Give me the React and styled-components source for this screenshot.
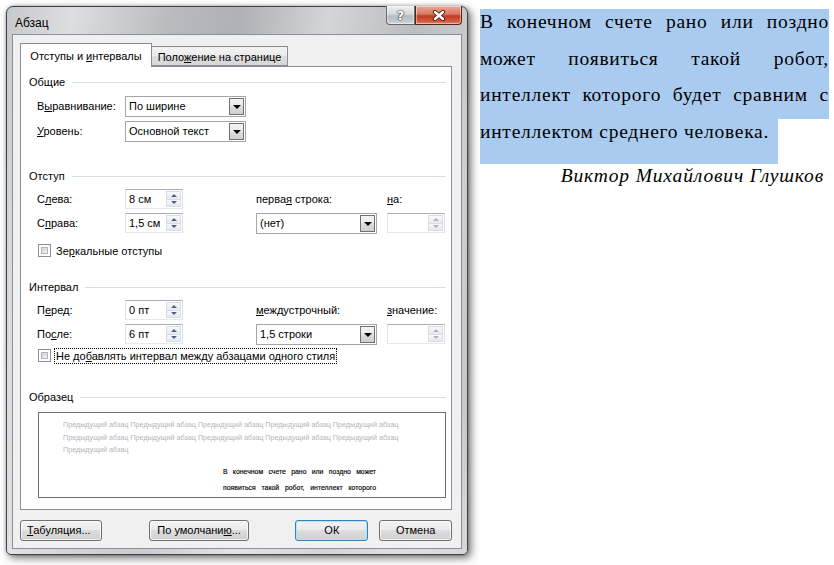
import React from 'react';
import styled, { createGlobalStyle } from 'styled-components';

const GlobalStyle = createGlobalStyle`
  html, body {
    margin: 0;
    background: #fff;
  }
  body {
    font-family: "Liberation Sans", Arial, sans-serif;
  }
`;

const uiFont = `"Liberation Sans", Arial, sans-serif`;

const Page = styled.div`
  display: flex;
  align-items: flex-start;
  padding: 6px 0 0 6px;
  width: 834px;
  height: 565px;
  box-sizing: border-box;
  overflow: hidden;
`;

// ---------- window frame ----------

const Window = styled.div`
  width: 462px;
  height: 549px;
  box-sizing: border-box;
  border: 1px solid #3f4246;
  border-radius: 7px 7px 5px 5px;
  padding: 0 5px 5px 5px;
  display: flex;
  flex-direction: column;
  background:
    linear-gradient(180deg, rgba(255, 255, 255, 0) 0%, rgba(255, 255, 255, 0) 70%, rgba(255, 255, 255, 0.35) 100%),
    linear-gradient(100deg, #c6c9cc 0%, #dcdedf 12%, #b8bbbe 30%, #aeb1b5 42%, #d3d5d7 58%, #bbbec1 74%, #cdcfd1 88%, #c0c3c6 100%);
  box-shadow: 3px 3px 9px rgba(0, 0, 0, 0.55), 0 0 3px rgba(0, 0, 0, 0.3);
  font-family: ${uiFont};
  font-size: 11px;
  color: #000;
`;

const TitleBar = styled.div`
  height: 27px;
  display: flex;
  align-items: flex-start;
`;

const Title = styled.div`
  flex: 1;
  padding: 9px 0 0 3px;
  font-size: 12px;
  line-height: 15px;
  color: #000;
`;

const CaptionButton = styled.div`
  height: 19px;
  width: ${(p) => p.$w}px;
  margin-top: -1px;
  box-sizing: border-box;
  display: flex;
  align-items: center;
  justify-content: center;
  border: 1px solid ${(p) => (p.$close ? '#5a2219' : '#62676d')};
  border-top: none;
  border-radius: ${(p) => (p.$close ? '0 0 4px 0' : '0 0 0 4px')};
  background: ${(p) =>
    p.$close
      ? 'linear-gradient(180deg, #e8aa96 0%, #d97b63 45%, #c23a22 55%, #cf5b40 85%, #e0866c 100%)'
      : 'linear-gradient(180deg, #eef0f2 0%, #d4d8dc 45%, #b6bcc3 55%, #c3c8ce 85%, #d8dce0 100%)'};
  box-shadow: inset 0 0 0 1px rgba(255, 255, 255, 0.45);
`;

const HelpGlyph = styled.span`
  font-family: "DejaVu Sans", sans-serif;
  font-weight: bold;
  font-size: 13px;
  color: #fff;
  text-shadow: 0 0 1px #3c4046, 0 0 1px #3c4046, 0 0 2px #3c4046;
`;

// ---------- client area ----------

const Client = styled.div`
  flex: 1;
  border: 1px solid #8b9096;
  background: #f0f0f0;
  padding: 8px 9px 7px 7px;
  display: flex;
  flex-direction: column;
`;

const TabStrip = styled.div`
  display: flex;
  align-items: flex-end;
  height: 23px;
  position: relative;
  z-index: 1;
`;

const Tab = styled.div`
  box-sizing: border-box;
  width: ${(p) => (p.$active ? 132 : 136)}px;
  height: ${(p) => (p.$active ? 24 : 20)}px;
  margin-bottom: ${(p) => (p.$active ? -1 : 0)}px;
  padding: ${(p) => (p.$active ? '5px 0 0 0' : '3px 0 0 0')};
  text-align: center;
  border: 1px solid #898c95;
  border-bottom: ${(p) => (p.$active ? 'none' : '1px solid #898c95')};
  border-left: ${(p) => (p.$active ? '1px solid #898c95' : 'none')};
  background: ${(p) =>
    p.$active ? '#fff' : 'linear-gradient(180deg, #f3f3f3 0%, #ebebeb 50%, #dedede 50%, #d6d6d6 100%)'};
  white-space: nowrap;
  line-height: 14px;
`;

const Panel = styled.div`
  width: 432px;
  height: 444px;
  box-sizing: border-box;
  border: 1px solid #898c95;
  background: #fff;
  padding: 8px 5px 0 8px;
`;

const SectionHead = styled.div`
  display: flex;
  align-items: center;
  height: 15px;
  margin-top: ${(p) => p.$top}px;
  line-height: 15px;

  &::after {
    content: '';
    flex: 1;
    height: 1px;
    margin-left: 7px;
    background: #d5dfe5;
  }
`;

const ControlGrid = styled.div`
  display: grid;
  grid-template-columns: 88px 131px 131px 59px;
  grid-auto-rows: ${(p) => p.$row}px;
  row-gap: 4px;
  margin: ${(p) => p.$top}px 0 0 8px;
  align-items: center;
`;

const Label = styled.div`
  line-height: 15px;
  white-space: nowrap;
  grid-column: ${(p) => p.$col || 'auto'};
`;

// ---------- inputs ----------

const SpinBox = styled.div`
  width: 58px;
  height: 20px;
  box-sizing: border-box;
  border: 1px solid;
  border-color: #abadb3 #dbdfe6 #e3e9ef #e2e3ea;
  background: #fff;
  display: flex;
`;

const SpinValue = styled.div`
  flex: 1;
  padding-left: 3px;
  line-height: 18px;
`;

const SpinButtons = styled.div`
  width: 15px;
  display: flex;
  flex-direction: column;
  padding: 1px 1px 1px 0;
`;

const SpinButton = styled.div`
  flex: 1;
  display: flex;
  align-items: center;
  justify-content: center;
  border: 1px solid #d7dde5;
  border-top: ${(p) => (p.$down ? 'none' : '1px solid #d7dde5')};
  background: linear-gradient(180deg, #f8f9fa, #e6e9ed);
`;

const Arrow = styled.span`
  width: 0;
  height: 0;
  border-left: 3px solid transparent;
  border-right: 3px solid transparent;
  ${(p) => (p.$down ? 'border-top' : 'border-bottom')}: 3px solid ${(p) => (p.$disabled ? '#a9b3c4' : '#4d6185')};
`;

const Select = styled.div`
  width: 121px;
  height: 21px;
  box-sizing: border-box;
  border: 1px solid #a5a5a5;
  background: #fff;
  display: flex;
`;

const SelectValue = styled.div`
  flex: 1;
  padding-left: 3px;
  line-height: 19px;
  white-space: nowrap;
`;

const SelectButton = styled.div`
  width: 15px;
  margin: 1px;
  box-sizing: border-box;
  border: 1px solid #707070;
  background: linear-gradient(180deg, #f2f2f2 0%, #ebebeb 50%, #dddddd 50%, #cfcfcf 100%);
  display: flex;
  align-items: center;
  justify-content: center;
`;

const SelectArrow = styled.span`
  width: 0;
  height: 0;
  margin-top: 1px;
  border-left: 4px solid transparent;
  border-right: 4px solid transparent;
  border-top: 4px solid #000;
`;

const CheckRow = styled.div`
  display: flex;
  align-items: center;
  height: 15px;
  margin: ${(p) => p.$top}px 0 0 9px;
`;

const CheckBox = styled.span`
  width: 13px;
  height: 13px;
  box-sizing: border-box;
  border: 1px solid #8e8f8f;
  background: #fff;
  padding: 2px;
  margin-right: 3px;

  &::before {
    content: '';
    display: block;
    width: 100%;
    height: 100%;
    border: 1px solid #aeb3b9;
    box-sizing: border-box;
    background: linear-gradient(135deg, #cbcfd5, #f6f6f6);
  }
`;

const CheckText = styled.span`
  line-height: 14px;
  padding: 0 1px;
  border: 1px dotted ${(p) => (p.$focus ? '#000' : 'transparent')};
`;

// ---------- sample ----------

const Sample = styled.div`
  margin: 7px 0 0 9px;
  width: 408px;
  height: 86px;
  box-sizing: border-box;
  border: 1px solid #6d6d6d;
  background: #fff;
  overflow: hidden;
  padding: 6px 36px 0 24px;
`;

const PrevText = styled.div`
  font-size: 7.2px;
  line-height: 12.5px;
  color: #b2b5b9;
`;

const SampleText = styled.div`
  margin: 7px 0 0 160px;
  width: 153px;
  font-size: 6.9px;
  line-height: 16px;
  color: #000;
  text-align: justify;
  -webkit-text-stroke: 0.15px #000;
`;

// ---------- buttons ----------

const ButtonRow = styled.div`
  display: flex;
  margin-top: 10px;
`;

const Button = styled.div`
  width: ${(p) => p.$w}px;
  height: 21px;
  margin-left: ${(p) => p.$gap || 0}px;
  box-sizing: border-box;
  border: 1px solid ${(p) => (p.$default ? '#3c7fb1' : '#707070')};
  border-radius: 3px;
  background: linear-gradient(180deg, #f2f2f2 0%, #ebebeb 50%, #dddddd 50%, #cfcfcf 100%);
  box-shadow: inset 0 0 0 1px ${(p) => (p.$default ? '#aee4fb' : 'rgba(255,255,255,0.7)')};
  text-align: ${(p) => (p.$left ? 'left' : 'center')};
  padding-left: ${(p) => (p.$left ? 6 : 0)}px;
  line-height: 19px;
  white-space: nowrap;
`;

// ---------- document text on the right ----------

const Doc = styled.div`
  margin: 3px 0 0 12px;
  width: 349px;
  font-family: "Liberation Serif", "Times New Roman", serif;
  font-size: 19.5px;
  letter-spacing: 0.75px;
  color: #000;
`;

const QuoteLine = styled.div`
  height: ${(p) => (p.$last ? 45 : 36.5)}px;
  line-height: 26px;
  background: #a9cbf0;
  white-space: nowrap;
  ${(p) =>
    p.$last
      ? `
    display: table;
    padding-right: 9px;
  `
      : `
    text-align: justify;
    text-align-last: justify;
  `}
`;

const Author = styled.div`
  text-align: right;
  font-style: italic;
  line-height: 24px;
  padding-right: 5px;
  letter-spacing: 0.85px;
`;

const CloseIcon = () => (
  <svg width="14" height="11" viewBox="0 0 14 11">
    <path d="M3 2 L11 9 M11 2 L3 9" stroke="#4a1a12" strokeWidth="4.2" strokeLinecap="round" />
    <path d="M3 2 L11 9 M11 2 L3 9" stroke="#fff" strokeWidth="2.4" strokeLinecap="round" />
  </svg>
);

const Spin = ({ value, disabled }) => (
  <SpinBox>
    <SpinValue>{value}</SpinValue>
    <SpinButtons>
      <SpinButton>
        <Arrow $disabled={disabled} />
      </SpinButton>
      <SpinButton $down>
        <Arrow $down $disabled={disabled} />
      </SpinButton>
    </SpinButtons>
  </SpinBox>
);

const Combo = ({ value }) => (
  <Select>
    <SelectValue>{value}</SelectValue>
    <SelectButton>
      <SelectArrow />
    </SelectButton>
  </Select>
);

const prev = 'Предыдущий абзац Предыдущий абзац Предыдущий абзац Предыдущий абзац Предыдущий абзац Предыдущий абзац Предыдущий абзац Предыдущий абзац Предыдущий абзац Предыдущий абзац Предыдущий абзац';

const App = () => (
  <>
    <GlobalStyle />
    <Page>
      <Window>
        <TitleBar>
          <Title>Абзац</Title>
          <CaptionButton $w={29}>
            <HelpGlyph>?</HelpGlyph>
          </CaptionButton>
          <CaptionButton $w={47} $close>
            <CloseIcon />
          </CaptionButton>
        </TitleBar>
        <Client>
          <TabStrip>
            <Tab $active>
              Отступы и <u>и</u>нтервалы
            </Tab>
            <Tab>
              Поло<u>ж</u>ение на странице
            </Tab>
          </TabStrip>
          <Panel>
            <SectionHead $top={0}>Общие</SectionHead>
            <ControlGrid $top={6} $row={21}>
              <Label $col={1}>
                В<u>ы</u>равнивание:
              </Label>
              <Combo value="По ширине" />
              <Label $col={1}>
                <u>У</u>ровень:
              </Label>
              <Combo value="Основной текст" />
            </ControlGrid>

            <SectionHead $top={27}>Отступ</SectionHead>
            <ControlGrid $top={5} $row={20}>
              <Label>
                С<u>л</u>ева:
              </Label>
              <Spin value="8 см" />
              <Label>
                перва<u>я</u> строка:
              </Label>
              <Label>
                <u>н</u>а:
              </Label>
              <Label>
                С<u>п</u>рава:
              </Label>
              <Spin value="1,5 см" />
              <Combo value="(нет)" />
              <Spin value="" disabled />
            </ControlGrid>
            <CheckRow $top={10}>
              <CheckBox />
              <CheckText>
                Зе<u>р</u>кальные отступы
              </CheckText>
            </CheckRow>

            <SectionHead $top={22}>Интервал</SectionHead>
            <ControlGrid $top={5} $row={20}>
              <Label>
                П<u>е</u>ред:
              </Label>
              <Spin value="0 пт" />
              <Label>
                <u>м</u>еждустрочный:
              </Label>
              <Label>
                <u>з</u>начение:
              </Label>
              <Label>
                По<u>с</u>ле:
              </Label>
              <Spin value="6 пт" />
              <Combo value="1,5 строки" />
              <Spin value="" disabled />
            </ControlGrid>
            <CheckRow $top={4}>
              <CheckBox />
              <CheckText $focus>
                Не до<u>б</u>авлять интервал между абзацами одного стиля
              </CheckText>
            </CheckRow>

            <SectionHead $top={27}>Образец</SectionHead>
            <Sample>
              <PrevText>{prev}</PrevText>
              <SampleText>
                В конечном счете рано или поздно может появиться такой робот, интеллект которого будет сравним с
                интеллектом среднего человека.
              </SampleText>
            </Sample>
          </Panel>
          <ButtonRow>
            <Button $w={82} $left>
              <span>
                <u>Т</u>абуляция...
              </span>
            </Button>
            <Button $w={101} $gap={47}>
              <span>
                По умолчани<u>ю</u>...
              </span>
            </Button>
            <Button $w={73} $gap={46} $default>
              <span>ОК</span>
            </Button>
            <Button $w={73} $gap={11}>
              <span>Отмена</span>
            </Button>
          </ButtonRow>
        </Client>
      </Window>
      <Doc>
        <QuoteLine>В конечном счете рано или поздно</QuoteLine>
        <QuoteLine>может появиться такой робот,</QuoteLine>
        <QuoteLine>интеллект которого будет сравним с</QuoteLine>
        <QuoteLine $last>интеллектом среднего человека.</QuoteLine>
        <Author>Виктор Михайлович Глушков</Author>
      </Doc>
    </Page>
  </>
);

export default App;
